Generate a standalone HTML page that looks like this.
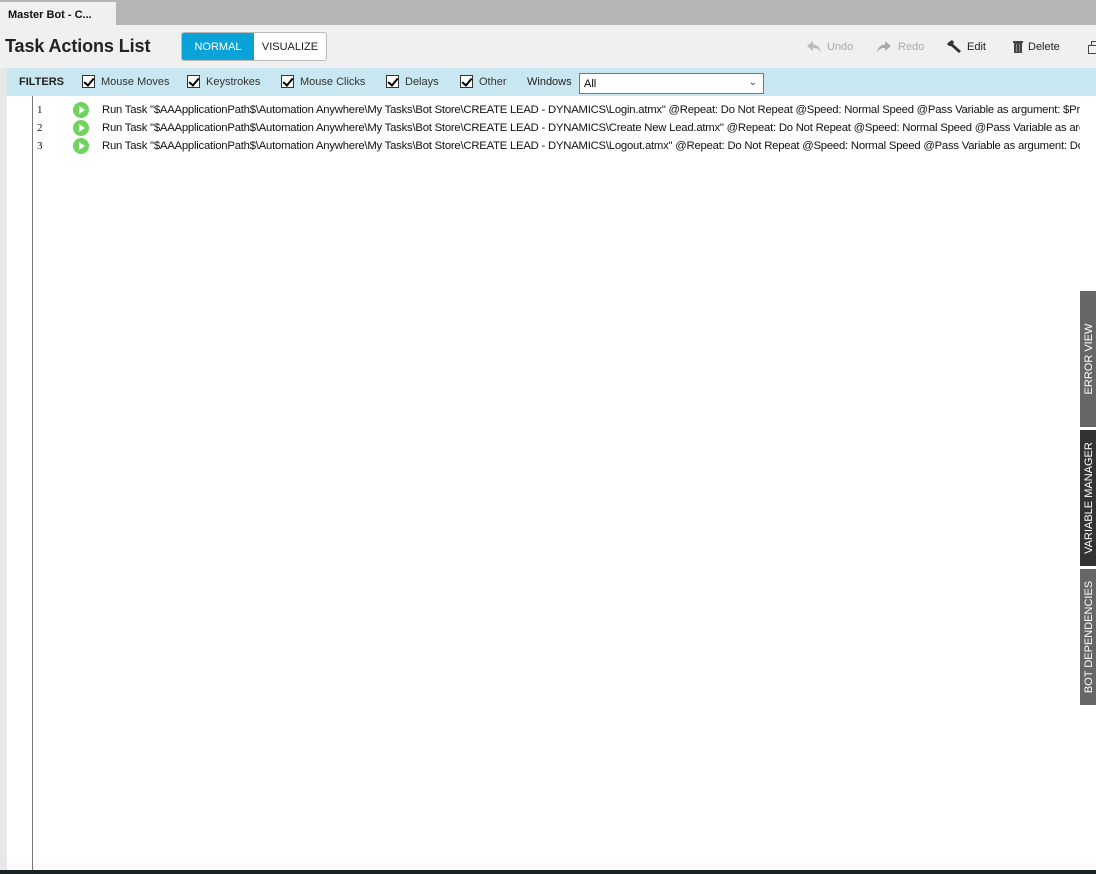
<!DOCTYPE html>
<html><head><meta charset="utf-8"><style>
*{margin:0;padding:0;box-sizing:border-box}
body{width:1096px;height:874px;overflow:hidden;background:#fff;font-family:"Liberation Sans",Arial,sans-serif;position:relative}
.abs{position:absolute}
.top{left:0;top:0;width:1096px;height:25px;background:#b5b5b5}
.tab{left:0;top:2px;width:116px;height:23px;background:#f0f0f0;font-size:11px;font-weight:bold;padding:7px 0 0 8px;color:#111}
.head{left:0;top:25px;width:1096px;height:43px;background:#f0f0f0}
.title{left:5px;top:36px;font-size:18px;font-weight:bold;color:#222;letter-spacing:-0.1px}
.seg{left:181px;top:32px;height:29px;width:146px;border:1px solid #bbb;border-radius:3px;background:#fff;overflow:hidden;font-size:11px}
.seg .n{position:absolute;left:0;top:0;width:72px;height:27px;background:#0aa3d8;color:#fff;text-align:center;line-height:29px}
.seg .v{position:absolute;left:72px;top:0;width:72px;height:27px;color:#222;text-align:center;line-height:29px}
.tb{top:41px;font-size:11px;color:#222}
.left{left:0;top:68px;width:7px;height:802px;background:#e8e8e8}
.fbar{left:7px;top:68px;width:1089px;height:28px;background:#c9e7f1;font-size:11px;color:#333}
.fbar span{position:absolute;top:8px}
.cb{position:absolute;top:7px;width:13px;height:13px;border:1px solid #333;background:#fff}
.cb:after{content:"";position:absolute;left:3px;top:0px;width:4px;height:8px;border:solid #000;border-width:0 2px 2px 0;transform:rotate(40deg)}
.sel{left:579px;top:73px;width:185px;height:21px;border:1px solid #777;background:#fff;font-size:11px;padding:4px 0 0 4px}
.vline{left:32px;top:96px;width:1px;height:774px;background:#777}
.row{left:0;height:18px;width:1080px;font-size:11.3px;color:#111;white-space:nowrap;overflow:hidden}
.row .num{position:absolute;left:37px;top:3px;font-family:"Liberation Serif",serif;font-size:11px}
.row .ic{position:absolute;left:73px;top:1px;width:16px;height:16px;border-radius:50%;background:#6fd35e}
.row .ic:after{content:"";position:absolute;left:6px;top:4px;border-left:6px solid #fff;border-top:4px solid transparent;border-bottom:4px solid transparent}
.row .t{position:absolute;left:102px;top:3px;letter-spacing:-0.22px;width:978px;overflow:hidden}
.side{left:1080px;width:16px;color:#fff;font-size:11px}
.side div{position:absolute;left:1px;top:50%;transform:translateY(-50%) rotate(-90deg);white-space:nowrap;transform-origin:center;width:140px;text-align:center;margin-left:-62px}
.bottom{left:0;top:870px;width:1096px;height:4px;background:#1b2326}
</style></head><body>
<div class="abs top"></div>
<div class="abs tab">Master Bot - C...</div>
<div class="abs head"></div>
<div class="abs title">Task Actions List</div>
<div class="abs seg"><div class="n">NORMAL</div><div class="v">VISUALIZE</div></div>
<svg class="abs" style="left:806px;top:40px" width="16" height="14" viewBox="0 0 16 14"><path d="M7 1 L1 6 L7 11 V8 C11 8 13 9 15 13 C14 7 11 4.5 7 4.5Z" fill="#bbb"/></svg>
<div class="abs tb" style="left:827px;color:#aaa">Undo</div>
<svg class="abs" style="left:876px;top:40px" width="16" height="14" viewBox="0 0 16 14"><path d="M9 1 L15 6 L9 11 V8 C5 8 3 9 1 13 C2 7 5 4.5 9 4.5Z" fill="#aaa"/></svg>
<div class="abs tb" style="left:898px;color:#aaa">Redo</div>
<svg class="abs" style="left:947px;top:39px" width="16" height="16" viewBox="0 0 16 16"><path d="M2 3 L5 1 L7 3 L6 5 L14 12 L12 14 L4 7 L2 7 L0 5Z" fill="#333"/></svg>
<div class="abs tb" style="left:967px">Edit</div>
<svg class="abs" style="left:1013px;top:41px" width="10" height="12" viewBox="0 0 10 12"><rect x="0" y="0" width="10" height="2" fill="#444"/><rect x="1" y="2" width="8" height="10" fill="#444"/><path d="M3.5 3v8M6.5 3v8" stroke="#888"/></svg>
<div class="abs tb" style="left:1028px">Delete</div>
<svg class="abs" style="left:1088px;top:40px" width="8" height="15" viewBox="0 0 8 15"><rect x="0.5" y="5.5" width="10" height="8" fill="none" stroke="#444"/><rect x="3.5" y="1.5" width="5" height="4" fill="none" stroke="#444"/></svg>
<div class="abs left"></div>
<div class="abs fbar">
<span style="left:12px;font-weight:bold;color:#222">FILTERS</span>
<div class="cb" style="left:75px"></div><span style="left:94px">Mouse Moves</span>
<div class="cb" style="left:180px"></div><span style="left:199px">Keystrokes</span>
<div class="cb" style="left:274px"></div><span style="left:293px">Mouse Clicks</span>
<div class="cb" style="left:379px"></div><span style="left:398px">Delays</span>
<div class="cb" style="left:453px"></div><span style="left:472px">Other</span>
<span style="left:520px;color:#222">Windows</span>
</div>
<div class="abs sel">All<span style="position:absolute;right:6px;top:3px;font-size:10px;color:#444">&#8964;</span></div>
<div class="abs vline"></div>
<div class="abs row" style="top:101px"><span class="num">1</span><span class="ic"></span><span class="t">Run Task "$AAApplicationPath$\Automation Anywhere\My Tasks\Bot Store\CREATE LEAD - DYNAMICS\Login.atmx" @Repeat: Do Not Repeat @Speed: Normal Speed @Pass Variable as argument: $Prompt-Assignment$</span></div>
<div class="abs row" style="top:119px"><span class="num">2</span><span class="ic"></span><span class="t">Run Task "$AAApplicationPath$\Automation Anywhere\My Tasks\Bot Store\CREATE LEAD - DYNAMICS\Create New Lead.atmx" @Repeat: Do Not Repeat @Speed: Normal Speed @Pass Variable as argument: $Prompt$</span></div>
<div class="abs row" style="top:137px"><span class="num">3</span><span class="ic"></span><span class="t">Run Task "$AAApplicationPath$\Automation Anywhere\My Tasks\Bot Store\CREATE LEAD - DYNAMICS\Logout.atmx" @Repeat: Do Not Repeat @Speed: Normal Speed @Pass Variable as argument: Do Not</span></div>
<div class="abs side" style="top:291px;height:136px;background:#666"><div>ERROR VIEW</div></div>
<div class="abs side" style="top:430px;height:136px;background:#333"><div>VARIABLE MANAGER</div></div>
<div class="abs side" style="top:569px;height:136px;background:#666"><div>BOT DEPENDENCIES</div></div>
<div class="abs bottom"></div>
</body></html>
